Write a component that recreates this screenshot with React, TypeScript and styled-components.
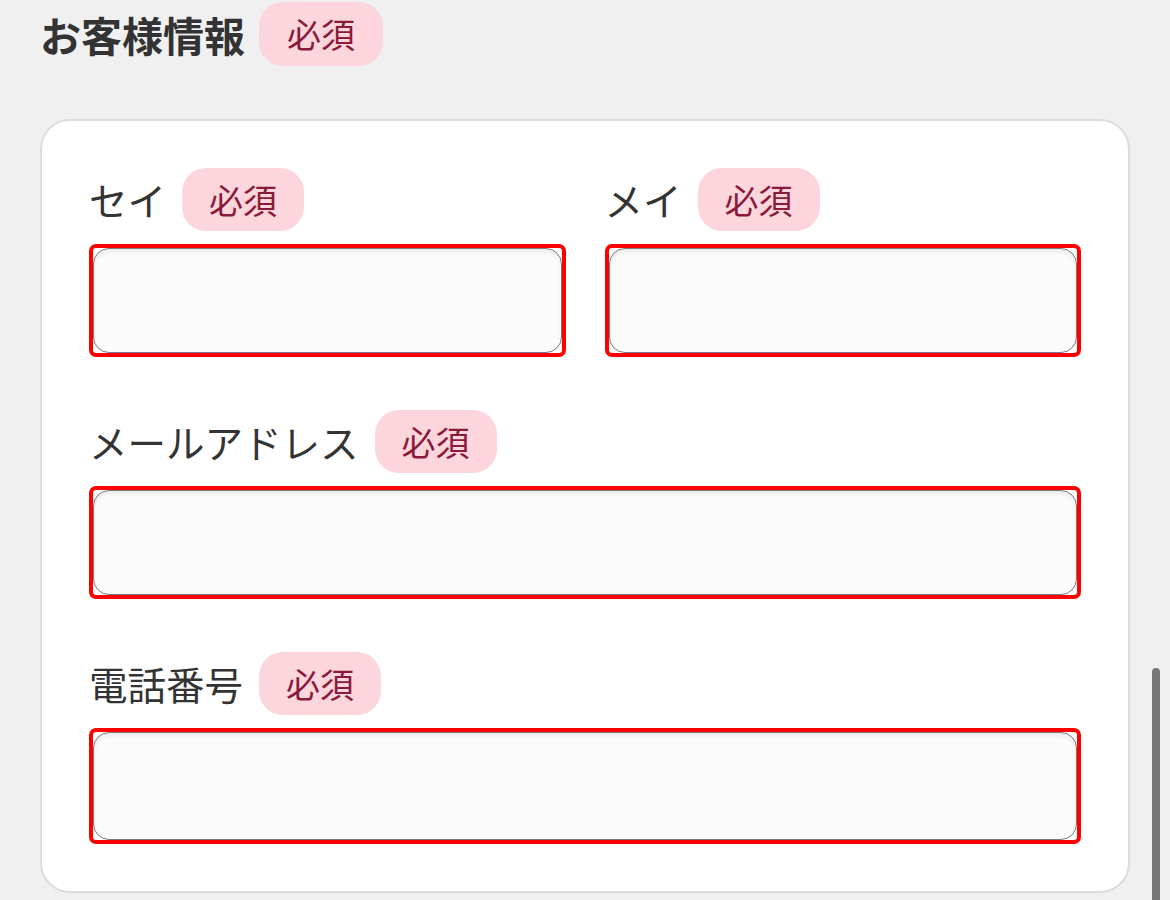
import React, { FC } from 'react';
import styled, { createGlobalStyle } from 'styled-components';

const GlobalStyle = createGlobalStyle`
  html, body {
    margin: 0;
    padding: 0;
    background: #f0f0f0;
    font-family: 'Noto Sans CJK JP', 'Noto Sans', sans-serif;
    color: #333;
  }
`;

const Page = styled.div`
  position: relative;
  width: 1170px;
  height: 900px;
  overflow: hidden;
  box-sizing: border-box;
  padding: 2px 40px 0 40px;
`;

const Heading = styled.div`
  display: flex;
  align-items: center;
  gap: 14px;
  height: 64px;
  margin-bottom: 53px;
`;

const HeadingText = styled.h2`
  margin: 0;
  font-size: 41px;
  font-weight: 700;
  line-height: 1;
  color: #333;
`;

const Badge = styled.span<{ large?: boolean }>`
  display: inline-flex;
  align-items: center;
  justify-content: center;
  height: ${({ large }) => (large ? '64px' : '63px')};
  padding: 0 ${({ large }) => (large ? '28px' : '27px')};
  border-radius: 24px;
  background: #fcd6dc;
  color: #8a1a3a;
  font-size: 34px;
  font-weight: 400;
  line-height: 1;
  box-sizing: border-box;
`;

const Card = styled.div`
  width: 1090px;
  box-sizing: border-box;
  background: #fff;
  border: 2px solid #dcdcdc;
  border-radius: 30px;
  padding: 47px 47px 47px 47px;
  display: flex;
  flex-direction: column;
  gap: 53px;
`;

const Row = styled.div`
  display: grid;
  grid-template-columns: 1fr 1fr;
  column-gap: 39px;
`;

const Field = styled.div`
  display: flex;
  flex-direction: column;
  gap: 13px;
`;

const LabelRow = styled.div`
  display: flex;
  align-items: center;
  gap: 16px;
  height: 63px;
`;

const Label = styled.label`
  font-size: 38.5px;
  font-weight: 400;
  line-height: 1;
  color: #333;
`;

const Frame = styled.div<{ tall?: boolean }>`
  border: 4px solid #ff0000;
  border-radius: 7px;
  height: ${({ tall }) => (tall ? '116px' : '113px')};
  box-sizing: border-box;
  overflow: hidden;
`;

const Input = styled.input`
  display: block;
  width: 100%;
  height: 100%;
  box-sizing: border-box;
  border: 1.5px solid #7a7a7a;
  border-radius: 16px;
  background: #fbfbfb;
  box-shadow: inset 0 3px 4px rgba(0, 0, 0, 0.07);
  outline: none;
  font-size: 30px;
  font-family: inherit;
  padding: 0 20px;
`;

const Scrollbar = styled.div`
  position: absolute;
  right: 10px;
  top: 668px;
  width: 8px;
  height: 260px;
  border-radius: 4px;
  background: #777;
`;

type FieldProps = { label: string; tall?: boolean };

const FormField: FC<FieldProps> = ({ label, tall }) => (
  <Field>
    <LabelRow>
      <Label>{label}</Label>
      <Badge>必須</Badge>
    </LabelRow>
    <Frame tall={tall}>
      <Input type="text" />
    </Frame>
  </Field>
);

const App: FC = () => (
  <>
    <GlobalStyle />
    <Page>
      <Heading>
        <HeadingText>お客様情報</HeadingText>
        <Badge large>必須</Badge>
      </Heading>
      <Card>
        <Row>
          <FormField label="セイ" />
          <FormField label="メイ" />
        </Row>
        <FormField label="メールアドレス" />
        <FormField label="電話番号" tall />
      </Card>
      <Scrollbar />
    </Page>
  </>
);

export default App;
